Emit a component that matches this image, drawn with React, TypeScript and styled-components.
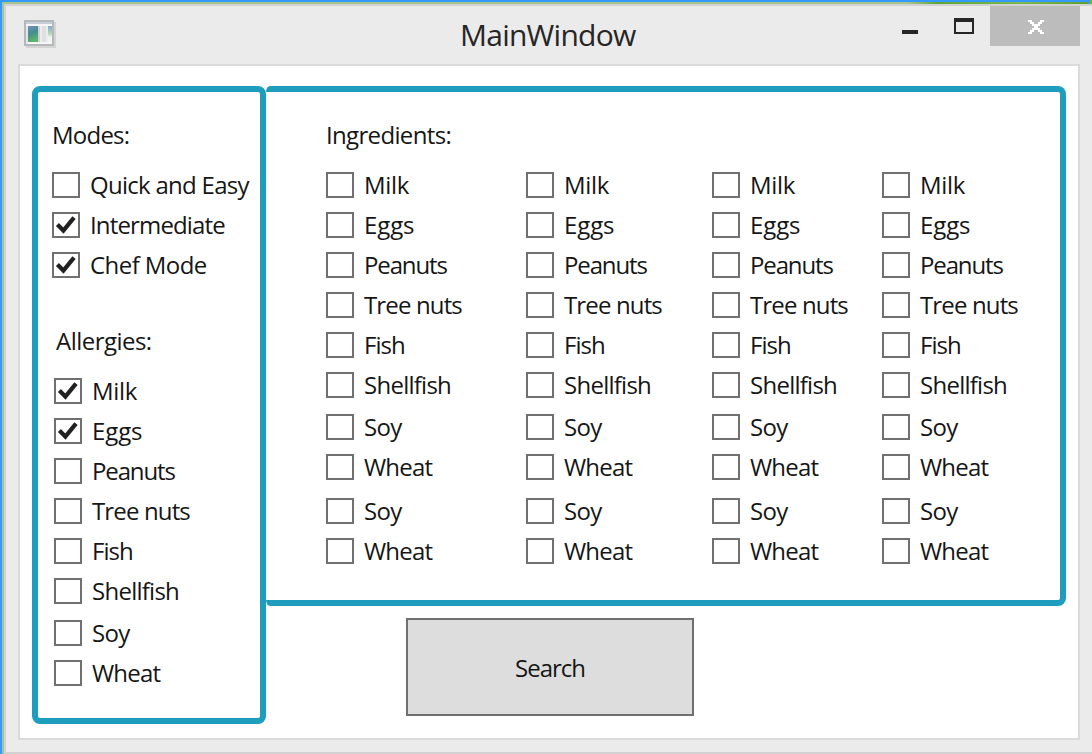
import React, { useState } from "react";
import styled, { createGlobalStyle, css } from "styled-components";

const Global = createGlobalStyle`
  *, *::before, *::after { box-sizing: border-box; }
  html, body { margin: 0; padding: 0; }
  body { width: 1092px; height: 754px; overflow: hidden; background: #ebebeb; }
`;

const font = css`
  font-family: "Open Sans", "Noto Sans", sans-serif;
  font-weight: 400;
`;

const Desktop = styled.div`
  width: 1092px;
  height: 754px;
  padding: 2px 0 0 2px;
  background: linear-gradient(to right, #3399ff 1090px, #76b900 1090px);
`;

const Edge = styled.div`
  height: 752px;
  padding: 2px 0 0 2px;
  background: linear-gradient(to right, #a9c48a 0, #a9c48a 905px, #5fa63a 935px, #7db94a 1020px, #5fa02f 1086px, #3399ff 1086px, #3399ff 1088px, #76b900 1088px);
`;

const Window = styled.div`
  height: 750px;
  background: #ebebeb;
  border: 2px solid #d2d2d2;
  border-right: 0;
  padding: 0 12px 12px 12px;
  display: flex;
  flex-direction: column;
`;

const TitleBar = styled.header`
  height: 58px;
  flex: none;
  display: grid;
  grid-template-columns: 446px 1fr auto;
  align-items: start;
`;

const AppIcon = styled.svg`
  display: block;
  margin: 14px 0 0 6px;
`;

const Title = styled.h1`
  ${font};
  margin: 9px 0 0 -4px;
  font-size: 30px;
  line-height: 40px;
  letter-spacing: -0.75px;
  color: #262626;
  white-space: nowrap;
`;

const Controls = styled.div`
  display: flex;
`;

const Control = styled.button<{ $w: number; $close?: boolean }>`
  width: ${(p) => p.$w}px;
  height: 40px;
  padding: 0;
  border: 0;
  background: ${(p) => (p.$close ? "#bcbcbc" : "transparent")};
  svg { display: block; }
`;

const Client = styled.main`
  flex: 1;
  width: 1062px;
  background: #fff;
  border: 2px solid #dadada;
  padding: 20px 0 0 12px;
  display: flex;
  align-items: flex-start;
`;

const SidePanel = styled.section`
  width: 234px;
  height: 638px;
  border: 6px solid #1e9ebc;
  border-radius: 8px;
  padding: 27px 0 0 14px;
`;

const MainColumn = styled.div`
  width: 800px;
`;

const IngredientsPanel = styled.section`
  height: 520px;
  border: 6px solid #1e9ebc;
  border-left-width: 0;
  border-radius: 8px;
  border-top-left-radius: 4px 6px;
  border-bottom-left-radius: 4px 6px;
  padding: 27px 0 0 60px;
`;

const Heading = styled.h2<{ $dx?: number; $ls: number }>`
  ${font};
  margin: 0 0 0 ${(p) => p.$dx ?? 0}px;
  height: 32px;
  font-size: 24px;
  line-height: 32px;
  letter-spacing: ${(p) => p.$ls}px;
  color: #161616;
`;

const List = styled.div<{ $dx?: number }>`
  margin: 21px 0 0 ${(p) => p.$dx ?? 0}px;
  display: flex;
  flex-direction: column;
`;

const Row = styled.label<{ $gap: number }>`
  display: flex;
  align-items: center;
  gap: 10px;
  height: 26px;
  margin-bottom: ${(p) => p.$gap}px;
`;

const Box = styled.span`
  flex: none;
  width: 28px;
  height: 26px;
  border: 2px solid #707070;
  background: #fff;
  svg { display: block; }
`;

const Caption = styled.span<{ $ls: number }>`
  ${font};
  font-size: 24px;
  line-height: 26px;
  letter-spacing: ${(p) => p.$ls}px;
  color: #161616;
  white-space: nowrap;
`;

const Columns = styled.div`
  display: grid;
  grid-template-columns: 200px 186px 170px 1fr;
`;

const Spacer = styled.div`
  height: 33px;
`;

const SearchButton = styled.button`
  ${font};
  display: block;
  width: 288px;
  height: 98px;
  margin: 12px 0 0 140px;
  padding: 0;
  border: 2px solid #707070;
  background: #dddddd;
  font-size: 24px;
  letter-spacing: -1px;
  color: #161616;
`;

const SPACING: Record<string, number> = {
  "Quick and Easy": -0.72,
  Intermediate: -0.85,
  "Chef Mode": -0.56,
  Milk: -0.3,
  Eggs: -0.1,
  Peanuts: -1.14,
  "Tree nuts": -0.86,
  Fish: -0.93,
  Shellfish: -0.74,
  Soy: -0.67,
  Wheat: -0.8,
};

type Item = { text: string; checked?: boolean; gap?: number };

function CheckItem({ item }: { item: Item }) {
  const [on, setOn] = useState(!!item.checked);
  return (
    <Row $gap={item.gap ?? 14} onClick={() => setOn(!on)}>
      <Box>
        {on && (
          <svg width="24" height="22" viewBox="0 0 24 22">
            <path d="M3.4 10.6 L9.4 16.6 L20 3.6" fill="none" stroke="#212121" strokeWidth="4.2" />
          </svg>
        )}
      </Box>
      <Caption $ls={SPACING[item.text]}>{item.text}</Caption>
    </Row>
  );
}

const modes: Item[] = [
  { text: "Quick and Easy" },
  { text: "Intermediate", checked: true },
  { text: "Chef Mode", checked: true },
];

const foods: Item[] = [
  { text: "Milk" },
  { text: "Eggs" },
  { text: "Peanuts" },
  { text: "Tree nuts" },
  { text: "Fish" },
  { text: "Shellfish", gap: 16 },
  { text: "Soy" },
  { text: "Wheat" },
];

const allergies: Item[] = foods.map((f, i) => ({ ...f, checked: i < 2 }));

const ingredients: Item[] = [
  ...foods.slice(0, 7),
  { text: "Wheat", gap: 18 },
  { text: "Soy" },
  { text: "Wheat" },
];

export default function App() {
  return (
    <>
      <Global />
      <Desktop>
        <Edge>
          <Window>
            <TitleBar>
              <AppIcon width="32" height="28" viewBox="0 0 32 28">
                <defs>
                  <linearGradient id="pane" x1="0" y1="0" x2="0.3" y2="1">
                    <stop offset="0" stopColor="#7191c0" />
                    <stop offset="0.5" stopColor="#438f8c" />
                    <stop offset="1" stopColor="#5cb56c" />
                  </linearGradient>
                  <linearGradient id="side" x1="0" y1="0" x2="0" y2="1">
                    <stop offset="0" stopColor="#8aa6d0" />
                    <stop offset="0.5" stopColor="#b4dcb8" />
                    <stop offset="0.7" stopColor="#f2f4f0" />
                  </linearGradient>
                </defs>
                <rect x="2" y="2" width="30" height="26" fill="#d4d4d4" />
                <rect x="0" y="0" width="30" height="26" fill="#b4b8bb" />
                <rect x="2" y="2" width="26" height="2" fill="#c8ced6" />
                <rect x="2" y="4" width="26" height="20" fill="#f6f6f8" />
                <rect x="2" y="6" width="2" height="18" fill="#e2e4ee" />
                <rect x="4" y="6" width="10" height="16" fill="url(#pane)" />
                <rect x="14" y="6" width="2" height="16" fill="#d4ccd8" />
                <rect x="16" y="6" width="8" height="16" fill="#ececec" />
                <rect x="18" y="6" width="4" height="16" fill="#e0e0e0" />
                <rect x="24" y="6" width="4" height="16" fill="url(#side)" />
              </AppIcon>
              <Title>MainWindow</Title>
              <Controls>
                <Control $w={54} aria-label="Minimize">
                  <svg width="54" height="40"><rect x="20" y="24" width="16" height="4" fill="#262626" /></svg>
                </Control>
                <Control $w={54} aria-label="Maximize">
                  <svg width="54" height="40">
                    <path fillRule="evenodd" fill="#262626" d="M18 12h20v16h-20zM20 16v10h16v-10z" />
                  </svg>
                </Control>
                <Control $w={90} $close aria-label="Close">
                  <svg width="90" height="40" shapeRendering="crispEdges">
                    <path
                      fill="#fff"
                      d="M38 14h4v2h2v2h4v-2h2v-2h4v2h-2v2h-2v2h-2v2h2v2h2v2h2v2h-4v-2h-2v-2h-4v2h-2v2h-4v-2h2v-2h2v-2h2v-2h-2v-2h-2v-2h-2z"
                    />
                  </svg>
                </Control>
              </Controls>
            </TitleBar>
            <Client>
              <SidePanel>
                <Heading $ls={-0.77}>Modes:</Heading>
                <List>{modes.map((m) => <CheckItem key={m.text} item={m} />)}</List>
                <Spacer />
                <Heading $dx={4} $ls={-0.53}>Allergies:</Heading>
                <List $dx={2}>{allergies.map((m) => <CheckItem key={m.text} item={m} />)}</List>
              </SidePanel>
              <MainColumn>
                <IngredientsPanel>
                  <Heading $ls={-0.66}>Ingredients:</Heading>
                  <Columns>
                    {[0, 1, 2, 3].map((c) => (
                      <List key={c}>{ingredients.map((m, i) => <CheckItem key={i} item={m} />)}</List>
                    ))}
                  </Columns>
                </IngredientsPanel>
                <SearchButton>Search</SearchButton>
              </MainColumn>
            </Client>
          </Window>
        </Edge>
      </Desktop>
    </>
  );
}
